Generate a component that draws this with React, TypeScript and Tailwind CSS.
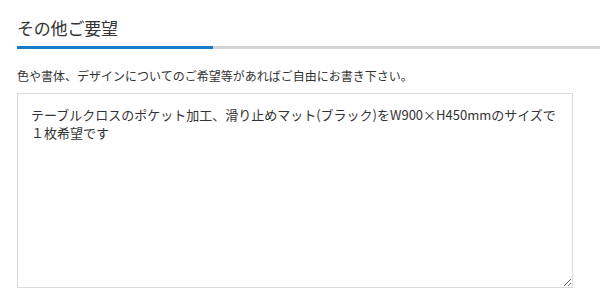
export default function App() {
  return (
    <div className="w-[600px] h-[300px] bg-white overflow-hidden font-['Noto_Sans_CJK_JP','Noto_Sans',sans-serif] text-[#333]">
      <div className="pl-[17px] pt-[16px]">
        <h2 className="text-[17px] leading-[24px] tracking-[-0.2px]">その他ご要望</h2>
      </div>
      <div className="mt-[6px] flex h-[3px]">
        <div className="w-[17px] bg-white" />
        <div className="w-[196px] bg-[#1b7bcb]" />
        <div className="flex-1 bg-[#d4d4d4]" />
      </div>
      <div className="px-[17px]">
        <p className="mt-[19px] text-[12px] leading-[16px]">
          色や書体、デザインについてのご希望等があればご自由にお書き下さい。
        </p>
        <textarea
          className="mt-[9px] block w-[556px] h-[195px] border border-[#dcdcdc] px-[13px] py-[12px] text-[13px] leading-[18px] text-[#333] outline-none"
          defaultValue={'テーブルクロスのポケット加工、滑り止めマット(ブラック)をW900×H450mmのサイズで\n１枚希望です'}
        />
      </div>
    </div>
  );
}
